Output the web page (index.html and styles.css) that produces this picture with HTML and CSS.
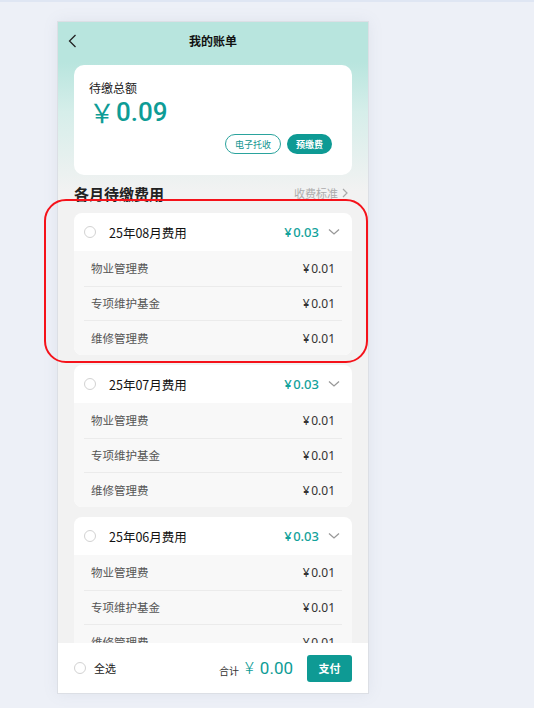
FILE: index.html
```html
<!DOCTYPE html>
<html lang="zh-CN">
<head>
<meta charset="utf-8">
<title>我的账单</title>
<link rel="stylesheet" href="styles.css">
</head>
<body>
<div class="topline"></div>
<div class="stage">
  <div class="phone">
    <div class="nav">
      <svg class="back" width="9" height="14" viewBox="0 0 9 14"><path d="M7.5 1 L1.5 7 L7.5 13" fill="none" stroke="#222" stroke-width="1.3"/></svg>
      <div class="nav-title">我的账单</div>
    </div>
    <div class="content">
      <div class="summary">
        <div class="summary-label">待缴总额</div>
        <div class="summary-amount"><span class="yen-big">￥</span>0.09</div>
        <div class="summary-actions">
          <span class="btn-outline">电子托收</span>
          <span class="btn-fill">预缴费</span>
        </div>
      </div>
      <div class="section-head">
        <div class="section-title">各月待缴费用</div>
        <div class="section-link">收费标准<svg width="6" height="10" viewBox="0 0 6 10"><path d="M1 1 L5 5 L1 9" fill="none" stroke="#aaa" stroke-width="1.2"/></svg></div>
      </div>
      <div class="months">
        <div class="month">
          <div class="month-head">
            <span class="radio"></span>
            <span class="month-title">25年08月费用</span>
            <span class="month-amount"><span class="yen">¥</span>0.03</span>
            <svg class="chev" width="12" height="8" viewBox="0 0 12 8"><path d="M1 1.5 L6 6 L11 1.5" fill="none" stroke="#999" stroke-width="1.3"/></svg>
          </div>
          <div class="rows">
            <div class="row"><span>物业管理费</span><span class="amt"><span class="yen">¥</span>0.01</span></div>
            <div class="row"><span>专项维护基金</span><span class="amt"><span class="yen">¥</span>0.01</span></div>
            <div class="row"><span>维修管理费</span><span class="amt"><span class="yen">¥</span>0.01</span></div>
          </div>
        </div>
        <div class="month">
          <div class="month-head">
            <span class="radio"></span>
            <span class="month-title">25年07月费用</span>
            <span class="month-amount"><span class="yen">¥</span>0.03</span>
            <svg class="chev" width="12" height="8" viewBox="0 0 12 8"><path d="M1 1.5 L6 6 L11 1.5" fill="none" stroke="#999" stroke-width="1.3"/></svg>
          </div>
          <div class="rows">
            <div class="row"><span>物业管理费</span><span class="amt"><span class="yen">¥</span>0.01</span></div>
            <div class="row"><span>专项维护基金</span><span class="amt"><span class="yen">¥</span>0.01</span></div>
            <div class="row"><span>维修管理费</span><span class="amt"><span class="yen">¥</span>0.01</span></div>
          </div>
        </div>
        <div class="month">
          <div class="month-head">
            <span class="radio"></span>
            <span class="month-title">25年06月费用</span>
            <span class="month-amount"><span class="yen">¥</span>0.03</span>
            <svg class="chev" width="12" height="8" viewBox="0 0 12 8"><path d="M1 1.5 L6 6 L11 1.5" fill="none" stroke="#999" stroke-width="1.3"/></svg>
          </div>
          <div class="rows">
            <div class="row"><span>物业管理费</span><span class="amt"><span class="yen">¥</span>0.01</span></div>
            <div class="row"><span>专项维护基金</span><span class="amt"><span class="yen">¥</span>0.01</span></div>
            <div class="row"><span>维修管理费</span><span class="amt"><span class="yen">¥</span>0.01</span></div>
          </div>
        </div>
      </div>
    </div>
    <div class="footer">
      <span class="radio"></span>
      <span class="all">全选</span>
      <span class="total-label">合计</span>
      <span class="total"><span class="total-yen">¥</span>0.00</span>
      <span class="pay">支付</span>
    </div>
  </div>
</div>
<div class="annot"></div>
</body>
</html>
```
FILE: styles.css
```css
* { box-sizing: border-box; }
html, body { margin: 0; padding: 0; }
body {
  background: #edf0f7;
  font-family: "Noto Sans CJK SC", "Noto Sans", sans-serif;
  color: #222;
  position: relative;
  height: 708px;
  overflow: hidden;
}
.topline { height: 2px; background: #dfe6f3; }
.stage { padding: 19px 0 0 57px; }
.phone {
  width: 312px;
  height: 673px;
  border: 1px solid #dcdfe5;
  box-shadow: 0 0 14px rgba(120, 130, 160, 0.10);
  background: linear-gradient(#b8e5de 0, #b8e5de 40px, #d6eeea 90px, #f2f2f2 170px, #f2f2f2 100%);
  display: flex;
  flex-direction: column;
  overflow: hidden;
}
.nav {
  height: 38px;
  display: flex;
  align-items: center;
  justify-content: center;
  position: relative;
  flex: none;
}
.back { position: absolute; left: 10px; top: 12px; }
.nav-title { font-size: 12px; font-weight: 700; color: #111; margin-top: -1px; }
.content { flex: 1; overflow: hidden; }
.summary {
  margin: 5px 16px 0;
  height: 110px;
  background: #fff;
  border-radius: 10px;
  padding: 14px 20px 0 15px;
}
.summary-label { font-size: 12px; line-height: 18px; color: #222; }
.summary-amount {
  font-family: Roboto, "Noto Sans", sans-serif;
  font-size: 26px;
  font-weight: 500;
  line-height: 30px;
  color: #0e9c96;
  display: flex;
  align-items: center;
}
.yen-big {
  font-family: "Noto Sans CJK SC", sans-serif;
  font-size: 26px;
  font-weight: 400;
  width: 27px;
}
.summary-actions {
  margin-top: 7px;
  display: flex;
  justify-content: flex-end;
  gap: 6px;
}
.btn-outline, .btn-fill {
  height: 20px;
  border-radius: 10px;
  font-size: 9px;
  display: flex;
  align-items: center;
  justify-content: center;
}
.btn-outline {
  width: 56px;
  border: 1px solid #2aa39d;
  color: #11958f;
}
.btn-fill {
  width: 45px;
  background: #0e9a94;
  color: #fff;
  font-weight: 700;
}
.section-head {
  margin-top: 7px;
  height: 22px;
  padding: 0 20px 0 16px;
  display: flex;
  align-items: center;
  justify-content: space-between;
}
.section-title { font-size: 15px; font-weight: 700; color: #222; }
.section-link {
  font-size: 11px;
  color: #acacac;
  display: flex;
  align-items: center;
  gap: 4px;
}
.months {
  margin: 9px 16px 0;
  display: flex;
  flex-direction: column;
  gap: 10px;
}
.month {
  height: 142px;
  background: #fff;
  border-radius: 8px;
  overflow: hidden;
  flex: none;
}
.month-head {
  height: 38px;
  display: flex;
  align-items: center;
  padding: 0 12px 0 10px;
}
.radio {
  width: 12px;
  height: 12px;
  border-radius: 50%;
  border: 1px solid #d2d2d2;
  background: #fff;
  flex: none;
}
.month-title { margin-left: 13px; font-size: 12.5px; color: #111; flex: 1; }
.month-amount {
  font-family: "Noto Sans", sans-serif;
  font-size: 13px;
  font-weight: 500;
  color: #13a29b;
}
.yen { margin-right: 1.5px; }
.chev { margin-left: 9px; }
.rows {
  background: #f8f8f8;
  padding: 0 10px;
  height: 104px;
}
.row {
  height: 34.67px;
  display: flex;
  align-items: center;
  justify-content: space-between;
  padding: 0 7px;
  font-size: 11.5px;
  color: #555;
}
.row + .row { border-top: 1px solid #ebebeb; }
.amt { font-family: "Noto Sans", sans-serif; font-size: 12px; color: #333; }
.footer {
  flex: none;
  height: 50px;
  background: #fff;
  display: flex;
  align-items: center;
  padding: 0 16px;
}
.all { margin-left: 8px; font-size: 11px; color: #222; flex: 1; }
.total-label { font-size: 10px; color: #333; margin-top: 4px; }
.total {
  margin-left: 6px;
  font-family: Roboto, "Noto Sans", sans-serif;
  font-size: 17px;
  color: #0e9c96;
  display: flex;
  align-items: center;
}
.total-yen { margin-right: 6px; font-weight: 300; }
.pay {
  margin-left: 14px;
  width: 45px;
  height: 27px;
  border-radius: 3px;
  background: #0e9a94;
  color: #fff;
  font-size: 11px;
  font-weight: 700;
  display: flex;
  align-items: center;
  justify-content: center;
}
.annot {
  position: absolute;
  left: 44px;
  top: 199px;
  width: 324px;
  height: 164px;
  border: 2.5px solid #f5121a;
  border-radius: 22px;
  pointer-events: none;
}
```
